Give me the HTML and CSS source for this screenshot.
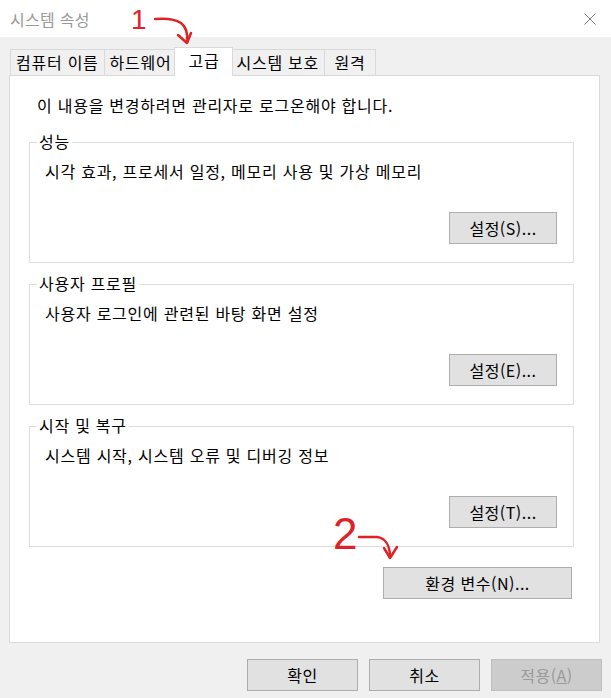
FILE: index.html
```html
<!DOCTYPE html>
<html lang="ko">
<head>
    <meta charset="utf-8">
    <title>시스템 속성</title>
    <link rel="stylesheet" href="styles.css">
</head>
<body>
<div class="window">
    <div class="titlebar">
        <span class="title">시스템 속성</span>
        <svg class="close" width="12" height="12" viewBox="0 0 12 12">
            <path d="M0.5 0.5 L11.5 11.5 M11.5 0.5 L0.5 11.5" stroke="#7a7a7a" stroke-width="1" fill="none"/>
        </svg>
    </div>

    <div class="tabs">
        <div class="tab">컴퓨터 이름</div>
        <div class="tab">하드웨어</div>
        <div class="tab active">고급</div>
        <div class="tab">시스템 보호</div>
        <div class="tab">원격</div>
    </div>

    <div class="panel">
        <p class="intro">이 내용을 변경하려면 관리자로 로그온해야 합니다.</p>

        <div class="group">
            <span class="legend">성능</span>
            <p class="desc">시각 효과, 프로세서 일정, 메모리 사용 및 가상 메모리</p>
            <div class="group-actions"><button class="btn">설정(S)...</button></div>
        </div>

        <div class="group">
            <span class="legend">사용자 프로필</span>
            <p class="desc">사용자 로그인에 관련된 바탕 화면 설정</p>
            <div class="group-actions"><button class="btn">설정(E)...</button></div>
        </div>

        <div class="group">
            <span class="legend">시작 및 복구</span>
            <p class="desc">시스템 시작, 시스템 오류 및 디버깅 정보</p>
            <div class="group-actions"><button class="btn">설정(T)...</button></div>
        </div>

        <div class="env-row"><button class="btn btn-env">환경 변수(N)...</button></div>
    </div>

    <div class="footer">
        <button class="btn btn-foot">확인</button>
        <button class="btn btn-foot">취소</button>
        <button class="btn btn-foot disabled">적용(<u>A</u>)</button>
    </div>

    <!-- 빨간 손글씨 표시 -->
    <span class="note note-1">1</span>
    <span class="note note-2">2</span>
    <svg class="arrows" width="611" height="698" viewBox="0 0 611 698">
        <path d="M155 19 C166 18 175 19 181 23 C186 27 188 34 187 42" />
        <path d="M178 35 L187 43 L191 33" />
        <path d="M359 537 L377 537 C385 538 390 545 390 557" />
        <path d="M384 548 L390 558 L397 547" />
    </svg>
</div>
</body>
</html>
```

FILE: styles.css
```css
body {
    margin: 0;
    background: #f0f0f0;
    font-family: "Noto Sans CJK KR", "Noto Sans", sans-serif;
    font-size: 16px;
    letter-spacing: 0.75px;
    color: #000;
    overflow: hidden;
}
.window {
    position: relative;
    width: 611px;
    height: 698px;
}
.titlebar {
    height: 37px;
    background: #fff;
    display: flex;
    align-items: center;
    justify-content: space-between;
    padding: 0 15px 0 10px;
    box-sizing: border-box;
}
.title {
    color: #999;
    line-height: 20px;
    letter-spacing: 0.3px;
}

/* 탭 */
.tabs {
    display: flex;
    align-items: flex-end;
    height: 38px;
    padding-left: 11px;
    box-sizing: border-box;
}
.tab {
    height: 26px;
    line-height: 24px;
    padding: 0 5px;
    min-width: 52px;
    text-align: center;
    box-sizing: border-box;
    border: 1px solid #d9d9d9;
    border-bottom: none;
    margin-left: -1px;
    background: #f0f0f0;
}
.tab.active {
    position: relative;
    z-index: 1;
    height: 29px;
    margin: 0 -2px -1px -3px;
    padding: 0 7px;
    min-width: 59px;
    background: #fff;
    line-height: 24px;
}

/* 본문 */
.panel {
    margin-left: 9px;
    width: 591px;
    height: 568px;
    box-sizing: border-box;
    border: 1px solid #d9d9d9;
    background: #fff;
    padding: 19px 25px 0 19px;
}
.intro {
    margin: 0 0 27px 8px;
    line-height: 20px;
}
.group {
    border: 1px solid #dcdcdc;
    padding-bottom: 18px;
    margin-top: 21px;
}
.intro + .group {
    margin-top: 0;
}
.legend {
    display: block;
    width: fit-content;
    margin: -12px 0 0 7px;
    padding: 0 2px;
    background: #fff;
    line-height: 20px;
}
.desc {
    margin: 10px 0 0 15px;
    line-height: 20px;
}
.group-actions {
    display: flex;
    justify-content: flex-end;
    margin-top: 31px;
    padding-right: 16px;
}
.btn {
    font-family: inherit;
    font-size: 16px;
    letter-spacing: 0.5px;
    color: #000;
    background: #e1e1e1;
    border: 1px solid #adadad;
    height: 32px;
    width: 108px;
    padding: 0;
    box-sizing: border-box;
}
.env-row {
    display: flex;
    justify-content: flex-end;
    margin-top: 20px;
    padding-right: 2px;
}
.btn-env {
    width: 189px;
}
.footer {
    display: flex;
    justify-content: flex-end;
    gap: 11px;
    padding: 16px 9px 0 0;
}
.btn-foot {
    width: 111px;
}
.btn.disabled {
    background: #cccccc;
    border-color: #bfbfbf;
    color: #9a9a9a;
}

/* 빨간 표시 */
.note {
    position: absolute;
    font-family: "Liberation Sans", sans-serif;
    font-weight: normal;
    letter-spacing: 0;
    color: #dd2327;
    line-height: 1;
}
.note-1 {
    left: 131px;
    top: 6px;
    font-size: 28px;
}
.note-2 {
    left: 333px;
    top: 512px;
    font-size: 44px;
}
.arrows {
    position: absolute;
    left: 0;
    top: 0;
    pointer-events: none;
}
.arrows path {
    fill: none;
    stroke: #dd2327;
    stroke-width: 2.5;
    stroke-linecap: round;
    stroke-linejoin: round;
}
```
